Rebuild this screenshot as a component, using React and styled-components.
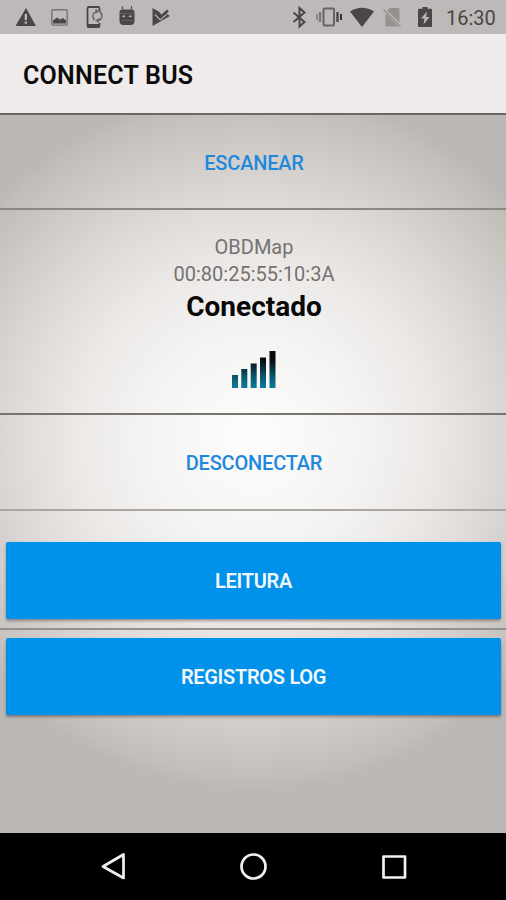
import styled, { createGlobalStyle } from "styled-components";

const GlobalStyle = createGlobalStyle`
  * {
    box-sizing: border-box;
  }
  body {
    margin: 0;
    font-family: Roboto, "Liberation Sans", sans-serif;
  }
`;

function App() {
  return (
    <Screen>
      <GlobalStyle />
      <StatusBar>
        <Icons>
          <svg width="180" height="34" fill="#494645">
            {/* warning */}
            <path fillRule="evenodd" d="M26 8L36 26H15.500ZM24.700 14v6h2.300v-6ZM24.700 21.500v2.300h2.300v-2.300Z" />
            {/* picture */}
            <rect x="51.800" y="9.700" width="15.400" height="15.400" rx="1" fill="none" stroke="#777372" strokeWidth="1.400" />
            <path d="M53 23.500v-3l4-3 3 2 3-1.500 3 2.500v3Z" />
            {/* phone sync */}
            <path fill="none" stroke="#494645" strokeWidth="1.800" d="M99.500 11V8.500a1.500 1.500 0 0 0-1.500-1.500H89a1.500 1.500 0 0 0-1.500 1.500v17a1.500 1.500 0 0 0 1.500 1.500h9a1.500 1.500 0 0 0 1.500-1.500V23" />
            <path d="M87 24h13v3.500H87Z" />
            <path fill="none" stroke="#6c6867" strokeWidth="1.500" d="M94.500 20a5 5 0 0 1 2-8.500M99.500 11.500a5 5 0 0 1-1 9" />
            <path d="M95.500 8.800l4 2.500-4 2.500ZM99 18l-4 2.500 4 2.500Z" fill="#6c6867" />
            {/* android head */}
            <path
              fillRule="evenodd"
              d="M119.500 12.500q0-3 3-3h9q3 0 3 3v8.500a4 4 0 0 1-4 4h-7a4 4 0 0 1-4-4ZM122.500 15.500v1.600h2.500v-1.600ZM129 15.500v1.600h2.500v-1.600Z"
            />
            <path fill="none" stroke="#5b5756" strokeWidth="1.300" d="M122.500 6v5M131.500 6v5" />
            <path stroke="#6b6766" strokeWidth="0.800" d="M119.500 13.500h15M122 20.500h10" />
            {/* play check */}
            <path d="M152.500 8l7 4 2 3 4-2 4.500 3-17.500 10Z" />
            <path fill="none" stroke="#bdb9b8" strokeWidth="1.200" d="M155 14.500l5.200 5.300 6.300-5.300" />
            <path fill="none" stroke="#494645" strokeWidth="2.600" d="M156 12.500l4.500 4.500 7.500-6.500" />
          </svg>
        </Icons>
        <Icons>
          <svg width="152" height="34" fill="#494645" viewBox="286 0 152 34">
            {/* bluetooth */}
            <path fill="none" stroke="#494645" strokeWidth="2" d="M293.500 12.500l11 9.500-5 4.500V8l5 4.500-11 9.500" />
            {/* vibrate */}
            <rect x="323.500" y="8.500" width="10.500" height="17" rx="1" fill="none" stroke="#686564" strokeWidth="2" />
            <path stroke="#7c7877" strokeWidth="2.400" d="M320 12v10" />
            <path stroke="#8f8b8a" strokeWidth="2" d="M317 14v6" />
            <path stroke="#494645" strokeWidth="2.400" d="M337.500 12v10" />
            <path stroke="#353231" strokeWidth="2" d="M341 14v6" />
            {/* wifi */}
            <path d="M350 11.500q12-7.500 24 0L362 27Z" />
            {/* no sim */}
            <path fill="#96918f" d="M390 8h8a1.500 1.500 0 0 1 1.500 1.500V22.500L387 10.500ZM385.500 13l13 13.500h-11.500a1.500 1.500 0 0 1-1.500-1.500Z" />
            <path stroke="#96918f" strokeWidth="1.500" d="M383.500 9.500l17 17" />
            {/* battery */}
            <path fillRule="evenodd" d="M422.500 7h5v1.800h3.500a1 1 0 0 1 1 1v16.200a1 1 0 0 1-1 1h-12a1 1 0 0 1-1-1V9.800a1 1 0 0 1 1-1h3.500ZM427 11.500l-6 7h3.500l-1 6 6-7.500H426Z" />
          </svg>
          <Clock>16:30</Clock>
        </Icons>
      </StatusBar>
      <Header>CONNECT BUS</Header>
      <Content>
        <Row $height="95px" $line="#8b8784">
          <LinkButton>ESCANEAR</LinkButton>
        </Row>
        <Device>
          <DeviceText>OBDMap</DeviceText>
          <DeviceText>00:80:25:55:10:3A</DeviceText>
          <DeviceState>Conectado</DeviceState>
          <Signal width="44" height="38">
            <defs>
              <linearGradient id="signal" gradientUnits="userSpaceOnUse" x1="0" y1="0" x2="0" y2="38">
                <stop offset="0.250" stopColor="#080a0c" />
                <stop offset="0.750" stopColor="#096079" />
                <stop offset="1" stopColor="#087c9b" />
              </linearGradient>
            </defs>
            <path
              fill="url(#signal)"
              d="M0 25h6v13H0ZM9.300 19h6v19h-6ZM18.700 13.500h6V38h-6ZM28 7.500h6V38h-6ZM37.500 1h6v37h-6Z"
            />
          </Signal>
        </Device>
        <Row $height="96px" $line="#aaa6a3">
          <LinkButton>DESCONECTAR</LinkButton>
        </Row>
        <Actions>
          <ActionButton>LEITURA</ActionButton>
          <Divider />
          <ActionButton>REGISTROS LOG</ActionButton>
        </Actions>
      </Content>
      <NavBar>
        <svg width="506" height="67" fill="none" stroke="#f1f1f1" strokeWidth="2.700" strokeLinejoin="round">
          <path d="M103 33.500L123.500 21.500V45Z" />
          <circle cx="253.500" cy="33.500" r="12" />
          <rect x="383.500" y="23.500" width="21.500" height="21" />
        </svg>
      </NavBar>
    </Screen>
  );
}

const Screen = styled.div`
  width: 506px;
  height: 900px;
  display: flex;
  flex-direction: column;
  overflow: hidden;
`;

const StatusBar = styled.div`
  height: 34px;
  display: flex;
  justify-content: space-between;
  background: #bdb9b8;
`;

const Icons = styled.div`
  display: flex;
  align-items: center;
`;

const Clock = styled.span`
  width: 68px;
  padding: 1px 0 0 8px;
  font-size: 20px;
  line-height: 24px;
  color: #494645;
`;

const Header = styled.header`
  height: 81px;
  padding: 4px 23px 0;
  display: flex;
  align-items: center;
  background: #efebea;
  border-bottom: 2px solid #6c6665;
  color: #0c0b0b;
  font-size: 25px;
  font-weight: 600;
  letter-spacing: 0.25px;
`;

const Content = styled.main`
  flex: 1;
  background: radial-gradient(
    circle 350px at 253px 325px,
    #fdfdfc 0%,
    #f4f3f2 32%,
    #ece9e7 50%,
    #dedad7 68%,
    #cecac7 84%,
    #c2beb9 96%,
    #bcb8b6 100%
  );
`;

const Row = styled.div`
  height: ${(props) => props.$height};
  display: flex;
  border-bottom: 2px solid ${(props) => props.$line};
`;

const LinkButton = styled.button`
  flex: 1;
  padding: 2px 0 0 2px;
  border: 0;
  background: none;
  color: #1e88dc;
  font-family: inherit;
  font-size: 20px;
  font-weight: 500;
  letter-spacing: -0.2px;
`;

const Device = styled.section`
  height: 205px;
  padding: 24px 0 0 2px;
  display: flex;
  flex-direction: column;
  align-items: center;
  border-bottom: 2px solid #777371;
`;

const DeviceText = styled.div`
  font-size: 20px;
  line-height: 26.500px;
  color: #757272;
`;

const DeviceState = styled.div`
  font-size: 28px;
  line-height: 40px;
  font-weight: 700;
  color: #080808;
`;

const Signal = styled.svg`
  margin-top: 23px;
`;

const Actions = styled.div`
  padding-top: 31px;
`;

const ActionButton = styled.button`
  display: block;
  width: 495px;
  height: 77px;
  margin: 0 0 0 6px;
  padding: 1px 0 0;
  border: 0;
  border-radius: 2px;
  background: #0091ea;
  box-shadow: 0 2px 3px rgba(0, 0, 0, 0.35);
  color: #f2f7fc;
  font-family: inherit;
  font-size: 20px;
  font-weight: 600;
  letter-spacing: -0.3px;
`;

const Divider = styled.div`
  height: 2px;
  margin: 9px 0 8px;
  background: #93908d;
`;

const NavBar = styled.nav`
  height: 67px;
  background: #000;
`;

export default App;
